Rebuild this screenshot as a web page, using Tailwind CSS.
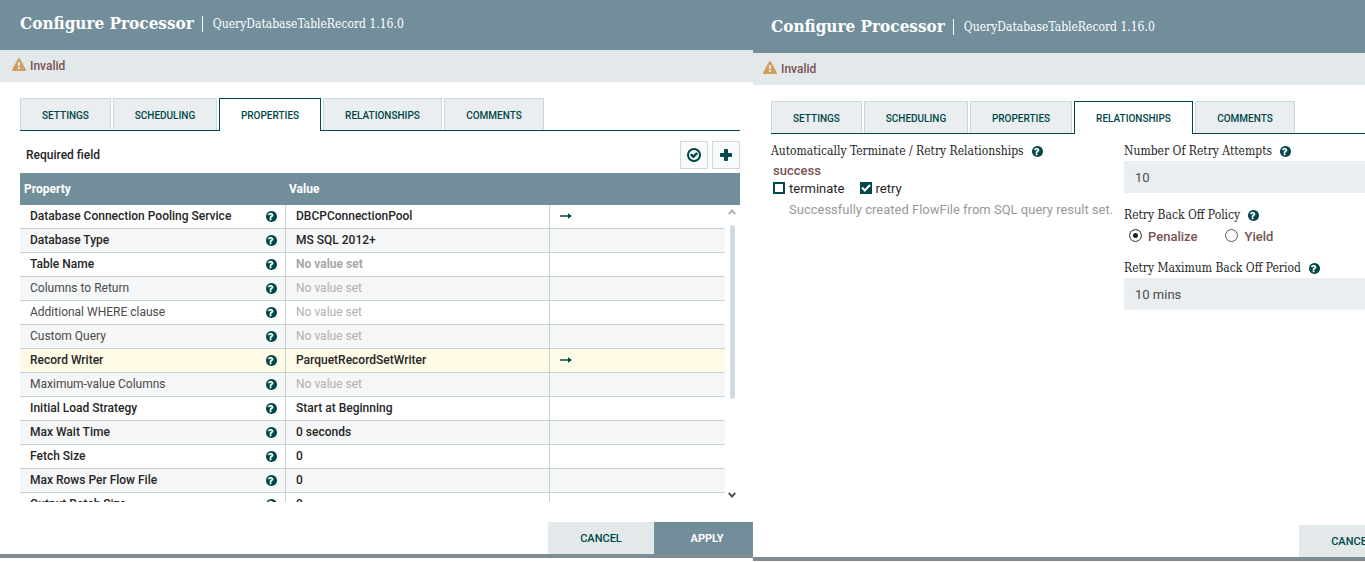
<!DOCTYPE html>
<html lang="en">
<head>
<meta charset="utf-8">
<title>Configure Processor</title>
<script src="https://cdn.jsdelivr.net/npm/@tailwindcss/browser@4"></script>
</head>
<body class="bg-white font-['Roboto','Liberation_Sans',sans-serif] text-[#262626]">
<svg class="hidden">
  <symbol id="help" viewBox="128 128 1536 1536"><path d="M896 1376v-192q0-14-9-23t-23-9h-192q-14 0-23 9t-9 23v192q0 14 9 23t23 9h192q14 0 23-9t9-23zm256-672q0-88-55.500-163t-138.500-116-170-41q-243 0-371 213-15 24 8 42l132 100q7 6 19 6 16 0 25-12 53-68 86-92 34-24 86-24 48 0 85.500 26t37.500 59q0 38-20 61t-68 45q-63 28-115.500 86.500t-52.500 125.500v36q0 14 9 23t23 9h192q14 0 23-9t9-23q0-19 21.500-49.500t54.500-49.500q32-18 49-28.500t46-35 44.500-48 28-60.500 12.500-81zm512 192q0 209-103 385.500t-279.500 279.500-385.500 103-385.500-103-279.500-279.500-103-385.500 103-385.500 279.500-279.500 385.500-103 385.500 103 279.500 279.500 103 385.500z"/></symbol>
  <symbol id="verify" viewBox="128 128 1536 1536"><path d="M1299 813l-422 422q-19 19-45 19t-45-19l-294-294q-19-19-19-45t19-45l102-102q19-19 45-19t45 19l147 147 275-275q19-19 45-19t45 19l102 102q19 19 19 45t-19 45zm141 83q0-148-73-273t-198-198-273-73-273 73-198 198-73 273 73 273 198 198 273 73 273-73 198-198 73-273zm224 0q0 209-103 385.500t-279.500 279.500-385.500 103-385.500-103-279.500-279.500-103-385.500 103-385.500 279.500-279.500 385.500-103 385.500 103 279.500 279.500 103 385.500z"/></symbol>
  <symbol id="warn" viewBox="0 0 1792 1664"><path d="M1024 1375v-190q0-14-9.500-23.500t-22.500-9.500h-192q-13 0-22.500 9.500t-9.500 23.500v190q0 14 9.500 23.500t22.500 9.500h192q13 0 22.500-9.500t9.500-23.500zm-2-374l18-459q0-12-10-19-13-11-24-11h-220q-11 0-24 11-10 7-10 21l17 457q0 10 10 16.500t24 6.500h185q14 0 23.500-6.500t10.500-16.500zm-14-934l768 1408q35 63-2 126-17 29-46.500 46t-63.500 17h-1536q-34 0-63.500-17t-46.500-46q-37-63-2-126l768-1408q17-31 47-49t65-18 65 18 47 49z"/></symbol>
  <symbol id="go" viewBox="0 0 12 6"><path d="M0 2.200h8V.300L12 3 8 5.700V3.800H0z"/></symbol>
</svg>
<main class="flex items-start overflow-hidden">

  <section class="w-[753px] shrink-0 border-b-4 border-[#7f8c93]">
    <header class="h-[50px] bg-[#728e9b] text-white flex items-center pl-5 pb-[3px] font-['Roboto_Slab','DejaVu_Serif_Condensed','DejaVu_Serif',serif]">
      <h1 class="text-[17px] font-bold pr-2">Configure Processor</h1>
      <p class="text-xs border-l border-white h-4 leading-4 pl-[10px]">QueryDatabaseTableRecord 1.16.0</p>
    </header>
    <div class="h-8 bg-[#e3e8eb] flex items-center pl-3 gap-1 text-xs font-medium text-[#775351]">
      <svg class="w-[14px] h-[13px] mb-[3px] fill-[#cf9f5d]"><use href="#warn"/></svg>Invalid
    </div>
    <div class="pl-5 pr-[13px] pt-4">
      <nav class="tabs flex gap-[2px] border-b border-[#004849] text-[10px] font-medium text-[#004849]" data-active="2"></nav>
      <div class="flex items-center h-[42px] pt-[6px] gap-1">
        <h2 class="flex-1 text-xs font-medium text-[#262626] pl-[6px]">Required field</h2>
        <button aria-label="Verify properties" class="size-7 border border-[#ccdadb] bg-[#f9fafb] grid place-items-center"><svg class="size-[14px] fill-[#004849]"><use href="#verify"/></svg></button>
        <button aria-label="Add property" class="size-7 border border-[#ccdadb] bg-[#f9fafb] grid place-items-center"><svg class="size-3 fill-[#004849]" viewBox="0 0 12 12"><path d="M4 1q0-1 1-1h2q1 0 1 1v3h3q1 0 1 1v2q0 1-1 1H8v3q0 1-1 1H5q-1 0-1-1V8H1q-1 0-1-1V5q0-1 1-1h3z"/></svg></button>
      </div>
      <div class="relative">
        <table class="block text-xs">
          <thead class="block bg-[#728e9b] text-white">
            <tr class="flex h-8 items-center text-left"><th class="w-[265px] pl-1 font-bold">Property</th><th class="pl-1 font-bold">Value</th></tr>
          </thead>
          <tbody id="rows" class="block h-[297px] overflow-hidden mr-[15px]"></tbody>
        </table>
        <div aria-hidden="true" class="absolute right-1 top-9 bottom-1 w-2 flex flex-col items-center">
          <svg class="w-2 h-[6px] fill-none stroke-[#b5b5b5] stroke-2" viewBox="0 0 8 6"><path d="M.7 5 4 1.500 7.300 5"/></svg>
          <div class="w-[5px] h-[174px] mt-[10px] rounded bg-[#d0dae1]"></div>
          <svg class="w-2 h-[6px] mt-auto fill-none stroke-[#555] stroke-2" viewBox="0 0 8 6"><path d="M.7 1 4 4.500 7.300 1"/></svg>
        </div>
      </div>
    </div>
    <footer class="flex justify-end mt-5 text-[11px]">
      <button class="w-[106px] h-8 pt-[2px] bg-[#e3e8eb] text-[#004849] font-medium">CANCEL</button>
      <button class="w-[99px] h-8 pt-[2px] bg-[#728e9b] text-white pl-[7px] font-bold">APPLY</button>
    </footer>
  </section>

  <section class="w-[753px] shrink-0 border-b-4 border-[#7f8c93]">
    <header class="h-[53px] bg-[#728e9b] text-white flex items-center pl-[18px] font-['Roboto_Slab','DejaVu_Serif_Condensed','DejaVu_Serif',serif]">
      <h1 class="text-[17px] font-bold pr-2">Configure Processor</h1>
      <p class="text-xs border-l border-white h-4 leading-4 pl-[10px]">QueryDatabaseTableRecord 1.16.0</p>
    </header>
    <div class="h-8 bg-[#e3e8eb] flex items-center pl-[10px] gap-1 text-xs font-medium text-[#775351]">
      <svg class="w-[14px] h-[13px] mb-[3px] fill-[#cf9f5d]"><use href="#warn"/></svg>Invalid
    </div>
    <div class="px-[18px] pt-4 h-[440px]">
      <nav class="tabs flex gap-[2px] border-b border-[#004849] text-[10px] font-medium text-[#004849]" data-active="3"></nav>
      <div class="flex pt-2 text-[13px]">
        <div class="w-[353px] shrink-0">
          <h2 class="flex items-center gap-2 h-[18px] text-xs font-['Roboto_Slab','DejaVu_Serif_Condensed','DejaVu_Serif',serif]">Automatically Terminate / Retry Relationships <svg class="size-[11px] fill-[#004849]"><use href="#help"/></svg></h2>
          <h3 class="h-5 leading-[22px] pl-[2px] font-medium text-[#775351]">success</h3>
          <div class="flex gap-[15px] pl-[2px] h-[18px]">
            <label class="flex items-center gap-1"><input type="checkbox" class="appearance-none size-3 mb-[2px] border-2 border-[#004849] bg-white">terminate</label>
            <label class="flex items-center gap-1"><span class="relative size-3 mb-[2px]"><input type="checkbox" checked class="block appearance-none size-3 border-2 border-[#004849] bg-[#004849]"><svg aria-hidden="true" class="absolute inset-0 size-3 pointer-events-none fill-none stroke-white stroke-2" viewBox="0 0 12 12"><path d="M2 5.500 4.800 8.500 10 3"/></svg></span>retry</label>
          </div>
          <p class="pl-[18px] pt-[2px] leading-5 text-[#999]">Successfully created FlowFile from SQL query result set.</p>
        </div>
        <div class="flex-1">
          <label for="attempts" class="flex items-center gap-2 h-[19px] pb-px text-xs font-['Roboto_Slab','DejaVu_Serif_Condensed','DejaVu_Serif',serif]">Number Of Retry Attempts <svg class="size-[11px] fill-[#004849]"><use href="#help"/></svg></label>
          <input id="attempts" value="10" class="block w-full h-8 bg-[#eaeef0] px-[11px] text-[#4a4a4a]">
          <fieldset class="pt-3">
            <legend class="contents"><span class="flex items-center gap-2 h-5 text-xs font-['Roboto_Slab','DejaVu_Serif_Condensed','DejaVu_Serif',serif]">Retry Back Off Policy <svg class="size-[11px] fill-[#004849]"><use href="#help"/></svg></span></legend>
            <div class="flex gap-7 pl-[5px] h-[22px] pt-px font-medium text-[#775351]">
              <label class="flex items-center gap-[6px]"><input type="radio" name="policy" checked class="appearance-none size-[13px] rounded-full border border-[#555] bg-[#222] shadow-[inset_0_0_0_3px_white] mb-[3px]">Penalize</label>
              <label class="flex items-center gap-[6px]"><input type="radio" name="policy" class="appearance-none size-[13px] rounded-full border border-[#555] bg-white mb-[3px]">Yield</label>
            </div>
          </fieldset>
          <label for="period" class="flex items-center gap-2 h-5 mt-[11px] text-xs font-['Roboto_Slab','DejaVu_Serif_Condensed','DejaVu_Serif',serif]">Retry Maximum Back Off Period <svg class="size-[11px] fill-[#004849]"><use href="#help"/></svg></label>
          <input id="period" value="10 mins" class="block w-full h-8 bg-[#eaeef0] px-[11px] text-[#4a4a4a]">
        </div>
      </div>
    </div>
    <footer class="flex justify-end pr-[2px] text-[11px]">
      <button class="w-[106px] h-8 pt-[2px] bg-[#e3e8eb] text-[#004849] font-medium">CANCEL</button>
      <button class="w-[99px] h-8 pt-[2px] bg-[#728e9b] text-white font-bold">APPLY</button>
    </footer>
  </section>
</main>
<script>
const tabWidths = { SETTINGS: 'w-[91px]', SCHEDULING: 'w-[104px]', PROPERTIES: 'w-[102px]', RELATIONSHIPS: 'w-[119px]', COMMENTS: 'w-[100px]' };
document.querySelectorAll('.tabs').forEach(nav => {
  nav.innerHTML = Object.entries(tabWidths).map(([name, w], i) =>
    i == nav.dataset.active
      ? `<button class="${w} h-[33px] -mb-px bg-white border border-b-0 border-[#004849]">${name}</button>`
      : `<button class="${w} h-8 pt-px bg-[#eaeef0] border border-b-0 border-[#ccdadb]">${name}</button>`).join('');
});
const rows = [
  ['Database Connection Pooling Service', 'DBCPConnectionPool', 1, 1],
  ['Database Type', 'MS SQL 2012+', 1],
  ['Table Name', '', 1],
  ['Columns to Return', '', 0],
  ['Additional WHERE clause', '', 0],
  ['Custom Query', '', 0],
  ['Record Writer', 'ParquetRecordSetWriter', 1, 1],
  ['Maximum-value Columns', '', 0],
  ['Initial Load Strategy', 'Start at Beginning', 1],
  ['Max Wait Time', '0 seconds', 1],
  ['Fetch Size', '0', 1],
  ['Max Rows Per Flow File', '0', 1],
  ['Output Batch Size', '0', 1]
];
document.getElementById('rows').innerHTML = rows.map(([name, value, required, link], i) => `
  <tr class="flex h-6 border-b border-[#c7d2d7] leading-[22px] ${i == 6 ? 'bg-[#fffae6]' : i % 2 ? 'bg-[#f4f6f7]' : 'bg-white'} ${required ? 'font-medium' : 'font-normal text-[#4a4a4a]'}">
    <td class="w-[266px] shrink-0 border-r border-[#c7d2d7] pl-[10px] pr-2 pb-px flex items-center justify-between">${name}<svg class="size-[11px] fill-[#004849]"><use href="#help"/></svg></td>
    <td class="w-[264px] shrink-0 border-r border-[#c7d2d7] pl-[10px] ${value ? '' : required ? 'font-bold text-[#a8a8a8]' : 'text-[#b0b0b0]'}">${value || 'No value set'}</td>
    <td class="flex-1 pl-[10px] pb-[2px] flex items-center">${link ? '<a href="#" aria-label="Go to service"><svg class="w-3 h-[6px] fill-[#004849]"><use href="#go"/></svg></a>' : ''}</td>
  </tr>`).join('');
</script>
</body>
</html>
